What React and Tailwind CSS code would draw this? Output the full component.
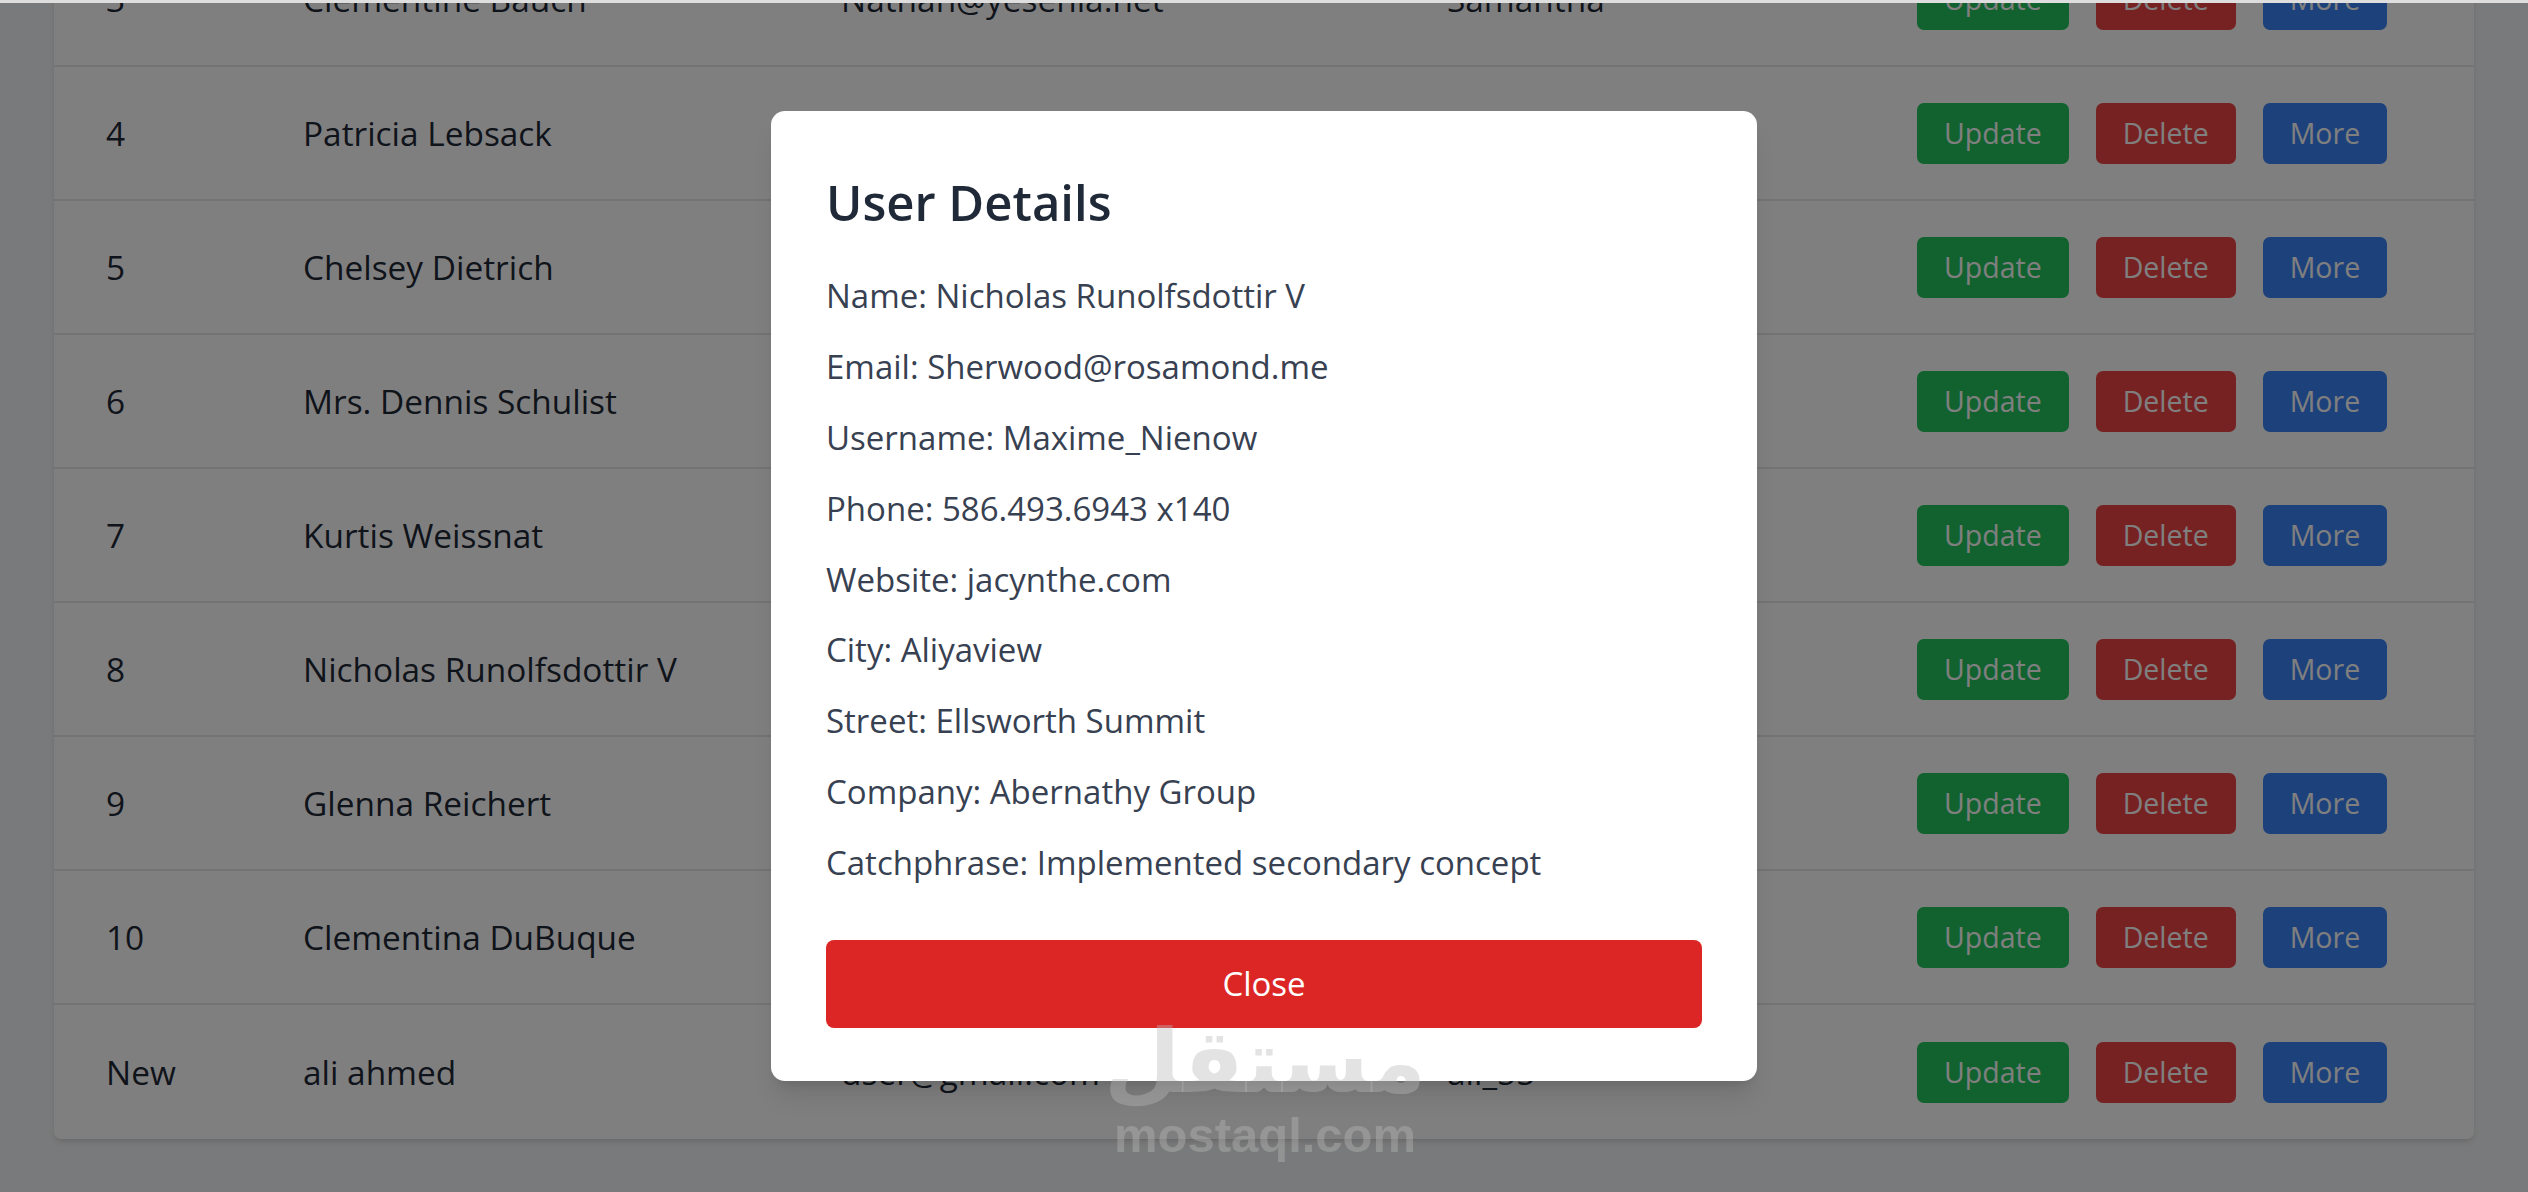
import React from "react";

const rows = [
  ["3", "Clementine Bauch", "Nathan@yesenia.net", "Samantha"],
  ["4", "Patricia Lebsack", "Julianne.OConner@kory.org", "Karianne"],
  ["5", "Chelsey Dietrich", "Lucio_Hettinger@annie.ca", "Kamren"],
  ["6", "Mrs. Dennis Schulist", "Karley_Dach@jasper.info", "Leopoldo_Corkery"],
  ["7", "Kurtis Weissnat", "Telly.Hoeger@billy.biz", "Elwyn.Skiles"],
  ["8", "Nicholas Runolfsdottir V", "Sherwood@rosamond.me", "Maxime_Nienow"],
  ["9", "Glenna Reichert", "Chaim_McDermott@dana.io", "Delphine"],
  ["10", "Clementina DuBuque", "Rey.Padberg@karina.biz", "Moriah.Stanton"],
  ["New", "ali ahmed", "user@gmail.com", "ali_55"],
];

const details = [
  "Name: Nicholas Runolfsdottir V",
  "Email: Sherwood@rosamond.me",
  "Username: Maxime_Nienow",
  "Phone: 586.493.6943 x140",
  "Website: jacynthe.com",
  "City: Aliyaview",
  "Street: Ellsworth Summit",
  "Company: Abernathy Group",
  "Catchphrase: Implemented secondary concept",
];

export default function App() {
  return (
    <div
      className="relative h-[1192px] w-full overflow-hidden bg-[#f3f4f6]"
      style={{ fontFamily: '"Open Sans", "Noto Sans", sans-serif' }}
    >
      <div className="px-[54px] mt-[-67px]">
        <div className="bg-white rounded-[7px] shadow-md">
          {rows.map((r, i) => (
            <div
              key={i}
              className={`grid grid-cols-[249px_538px_606px_470px_1fr] items-center h-[134px] text-[33.4px] text-[#1f2937] ${
                i < rows.length - 1 ? "border-b-2 border-[#e5e7eb]" : ""
              }`}
            >
              <div className="pl-[52px]">{r[0]}</div>
              <div>{r[1]}</div>
              <div>{r[2]}</div>
              <div>{r[3]}</div>
              <div className="flex items-center gap-[27px] text-[28.5px] text-white">
                <button className="h-[61px] px-[27px] rounded-[7px] bg-[#22c55e] leading-none">Update</button>
                <button className="h-[61px] px-[27px] rounded-[7px] bg-[#ef4444] leading-none">Delete</button>
                <button className="h-[61px] px-[27px] rounded-[7px] bg-[#3b82f6] leading-none">More</button>
              </div>
            </div>
          ))}
        </div>
      </div>

      <div className="absolute inset-0 bg-black/50 flex items-center justify-center">
        <div className="w-[986px] bg-white rounded-[14px] shadow-xl pt-[60px] px-[55px] pb-[53px]">
          <h2 className="text-[49px] leading-[63px] font-semibold text-[#1f2937] mb-[37px]">User Details</h2>
          <div className="flex flex-col gap-[21.8px]">
            {details.map((d, i) => (
              <p key={i} className="text-[33px] leading-[49px] text-[#374151]">
                {d}
              </p>
            ))}
          </div>
          <button className="mt-[53px] w-full h-[88px] rounded-[8px] bg-[#dc2626] text-white text-[33px]">
            Close
          </button>
        </div>
      </div>

      <div className="absolute top-0 left-0 right-0 h-[3px] bg-[#dedede]" />

      <div className="absolute left-[1100px] top-[1014px] w-[330px] flex flex-col items-center pointer-events-none text-[rgba(186,186,186,0.4)]">
        <div
          className="text-[88px] leading-[96px] font-bold"
          style={{ fontFamily: '"DejaVu Sans", sans-serif' }}
        >
          مستقل
        </div>
        <div
          className="text-[49px] leading-[50px] font-bold"
          style={{ fontFamily: '"Liberation Sans", Arial, sans-serif' }}
        >
          mostaql.com
        </div>
      </div>
    </div>
  );
}
